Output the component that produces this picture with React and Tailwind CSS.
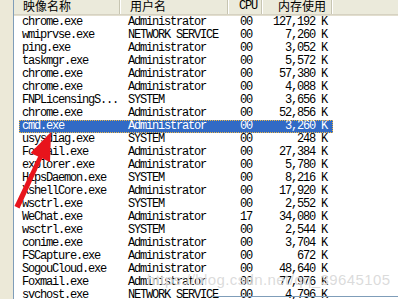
import React from 'react';

const rows = [
  ['chrome.exe', 'Administrator', '00', '127,192 K'],
  ['wmiprvse.exe', 'NETWORK SERVICE', '00', '7,260 K'],
  ['ping.exe', 'Administrator', '00', '3,052 K'],
  ['taskmgr.exe', 'Administrator', '00', '5,572 K'],
  ['chrome.exe', 'Administrator', '00', '57,380 K'],
  ['chrome.exe', 'Administrator', '00', '4,088 K'],
  ['FNPLicensingS...', 'SYSTEM', '00', '3,656 K'],
  ['chrome.exe', 'Administrator', '00', '52,856 K'],
  ['cmd.exe', 'Administrator', '00', '3,260 K'],
  ['usysdiag.exe', 'SYSTEM', '00', '248 K'],
  ['Foxmail.exe', 'Administrator', '00', '27,384 K'],
  ['explorer.exe', 'Administrator', '00', '5,780 K'],
  ['HipsDaemon.exe', 'SYSTEM', '00', '8,216 K'],
  ['XshellCore.exe', 'Administrator', '00', '17,920 K'],
  ['wsctrl.exe', 'SYSTEM', '00', '2,552 K'],
  ['WeChat.exe', 'Administrator', '17', '34,080 K'],
  ['wsctrl.exe', 'SYSTEM', '00', '2,544 K'],
  ['conime.exe', 'Administrator', '00', '3,704 K'],
  ['FSCapture.exe', 'Administrator', '00', '672 K'],
  ['SogouCloud.exe', 'Administrator', '00', '48,640 K'],
  ['Foxmail.exe', 'Administrator', '00', '77,976 K'],
  ['svchost.exe', 'NETWORK SERVICE', '00', '4,796 K'],
];

const SELECTED = 8;

function HeaderCell({ width, children, right }) {
  return (
    <div
      className={`h-full shrink-0 flex items-end pb-[2px] border-r border-[#c7c5b2] shadow-[1px_0_0_#ffffff] ${
        right ? 'justify-end pr-[5px]' : ''
      } ${width}`}
    >
      {children}
    </div>
  );
}

export default function App() {
  return (
    <div className="relative w-[398px] h-[299px] overflow-hidden flex bg-white font-['Liberation_Mono','Noto_Sans_CJK_SC',monospace] text-black">
      {/* window frame strip */}
      <div className="w-[13px] shrink-0 bg-[#ece9d8]" />

      {/* list view */}
      <div className="flex-1 border-l border-[#7f9db9] bg-white flex flex-col">
        {/* column header */}
        <div className="h-[15px] shrink-0 flex bg-[#ebeadb] border-b border-[#d6d2c2] shadow-[0_1px_0_#e2dece] font-['Noto_Sans_CJK_SC',sans-serif] text-[12px] leading-[12px]">
          <HeaderCell width="w-[106px] pl-[9px]">映像名称</HeaderCell>
          <HeaderCell width="w-[108px] pl-[10px]">用户名</HeaderCell>
          <HeaderCell width="w-[34px] pl-[11px]">
            <span className="font-['Liberation_Mono',monospace] tracking-[-1.2px]">CPU</span>
          </HeaderCell>
          <HeaderCell width="w-[70px]" right>内存使用</HeaderCell>
          <div className="flex-1" />
        </div>

        {/* rows */}
        <div className="pt-[1px] pl-[5px] text-[12px] leading-[13px] tracking-[-1.2px] whitespace-nowrap">
          {rows.map((r, i) => (
            <div
              key={i}
              className={`w-[314px] h-[13px] flex ${
                i === SELECTED
                  ? 'bg-[#316ac5] text-white outline-1 outline-dotted outline-offset-[-1px] outline-[#e8b548]'
                  : ''
              }`}
            >
              <div className="w-[101px] shrink-0 pl-[3px] overflow-hidden">{r[0]}</div>
              <div className="w-[108px] shrink-0 pl-[8px] overflow-hidden">{r[1]}</div>
              <div className="w-[34px] shrink-0 pl-[12px]">{r[2]}</div>
              <div className="w-[70px] shrink-0 pr-[5px] text-right">{r[3]}</div>
            </div>
          ))}
        </div>
      </div>

      {/* red arrow annotation */}
      <svg className="absolute left-0 top-0 pointer-events-none" width="398" height="299">
        <polygon
          points="14.5,206 19.5,208.5 42.5,157.8 38.5,155.8"
          fill="#e8141c"
        />
        <polygon points="51,132 50,162 30.5,153" fill="#e8141c" />
      </svg>

      {/* watermark */}
      <div className="absolute left-[147px] top-[271px] font-['Liberation_Sans',sans-serif] text-[15px] leading-[18px] text-[#c4c4c4]/60 tracking-[0.4px] pointer-events-none [text-shadow:0_0_1px_#ffffff]">
        https://blog.csdn.net/qq_39645105
      </div>
      <div className="absolute left-[213px] right-0 top-[296px] h-[1px] bg-[#7f9db9]" />
    </div>
  );
}
